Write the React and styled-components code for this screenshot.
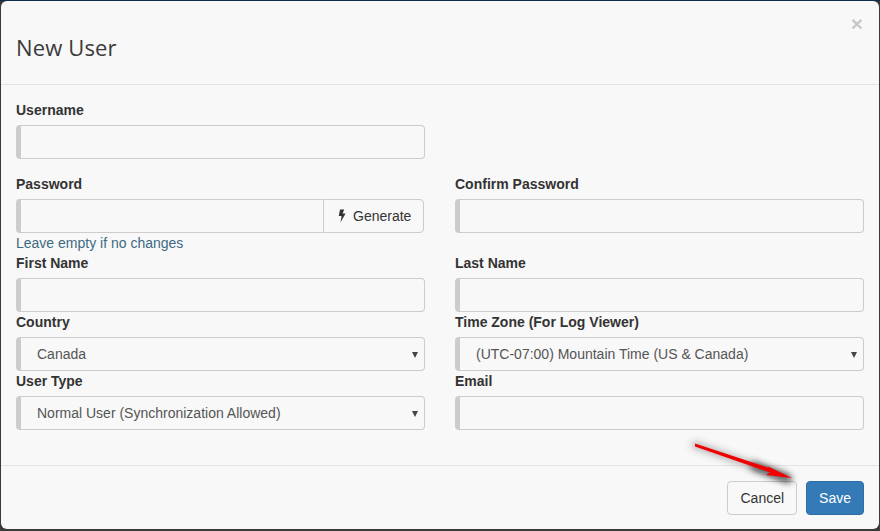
import React from "react";
import styled, { createGlobalStyle } from "styled-components";

const GlobalStyle = createGlobalStyle`
  html, body {
    margin: 0;
    padding: 0;
    background: #3a3a3a;
  }
  * {
    box-sizing: border-box;
  }
`;

const Backdrop = styled.div`
  width: 880px;
  height: 531px;
  padding: 0 1px 2px 1px;
  background: #3a3a3a;
  border-top: 1px solid #0f2b52;
  overflow: hidden;
`;

const Modal = styled.div`
  height: 100%;
  background: #f8f8f8;
  border-radius: 6px;
  font-family: "Liberation Sans", Arial, sans-serif;
  font-size: 14px;
  line-height: 20px;
  color: #333;
  display: flex;
  flex-direction: column;
`;

const Header = styled.header`
  position: relative;
  height: 84px;
  padding: 31px 15px 0;
  border-bottom: 1px solid #e5e5e5;
`;

const Title = styled.h4`
  margin: 0;
  font-family: "Open Sans", sans-serif;
  font-size: 22px;
  font-weight: 400;
  line-height: 30px;
  letter-spacing: 0.15px;
  color: #3a3a3a;
`;

const Close = styled.span`
  position: absolute;
  top: 12px;
  right: 16px;
  font-size: 21px;
  font-weight: 700;
  line-height: 21px;
  color: #c8c8c8;
`;

const Body = styled.form`
  flex: 1;
  padding: 15px 14px 0 15px;
  display: grid;
  grid-template-columns: 409px 409px;
  column-gap: 30px;
  align-content: start;
`;

const Group = styled.div`
  margin-bottom: ${(p) => (p.$spaced ? "15px" : "0")};
`;

const Label = styled.label`
  display: block;
  margin-bottom: 5px;
  font-weight: 700;
  color: #333;
`;

const Input = styled.input`
  display: block;
  width: 100%;
  height: 34px;
  padding: 6px 12px;
  background: transparent;
  border: 1px solid #ccc;
  border-left: 5px solid #ccc;
  border-radius: 4px;
  font: inherit;
  outline: none;
`;

const InputGroup = styled.div`
  display: flex;
  height: 34px;
  margin-right: 1px;
`;

const GroupedInput = styled(Input)`
  flex: 1;
  border-right: 0;
  border-radius: 4px 0 0 4px;
`;

const AddonButton = styled.button`
  width: 101px;
  display: flex;
  align-items: center;
  gap: 7px;
  padding: 0 0 0 14px;
  background: transparent;
  border: 1px solid #ccc;
  border-radius: 0 4px 4px 0;
  font: inherit;
  color: #333;
`;

const SelectBox = styled.div`
  position: relative;
  height: 34px;
  padding: 6px 12px 6px 16px;
  border: 1px solid #ccc;
  border-left: 5px solid #ccc;
  border-radius: 4px;
  color: #555;
  white-space: nowrap;

  &::after {
    content: "";
    position: absolute;
    right: 6px;
    top: 14px;
    border-left: 3px solid transparent;
    border-right: 3px solid transparent;
    border-top: 6px solid #444;
  }
`;

const Help = styled.div`
  color: #3d6a82;
  height: 20px;
`;

const Footer = styled.footer`
  position: relative;
  padding: 15px 15px 14px;
  border-top: 1px solid #e5e5e5;
  display: flex;
  justify-content: flex-end;
  gap: 9px;
`;

const Button = styled.button`
  height: 34px;
  padding: 6px 12px;
  border: 1px solid ${(p) => (p.$primary ? "#2e6da4" : "#ccc")};
  border-radius: 4px;
  background: ${(p) => (p.$primary ? "#337ab7" : "transparent")};
  color: ${(p) => (p.$primary ? "#fff" : "#333")};
  font: inherit;
`;

const Arrow = styled.svg`
  position: absolute;
  left: 685px;
  top: -30px;
  width: 130px;
  height: 60px;
  overflow: visible;
`;

function Bolt() {
  return (
    <svg width="8" height="14" viewBox="0 0 8 14" aria-hidden="true">
      <path d="M2 0.5h4.2L4.6 4.6h3L2.4 13.5l1.2-6.4H0.8z" fill="#333" />
    </svg>
  );
}

function App() {
  return (
    <Backdrop>
      <GlobalStyle />
      <Modal>
        <Header>
          <Title>New User</Title>
          <Close>×</Close>
        </Header>
        <Body>
          <Group $spaced>
            <Label>Username</Label>
            <Input />
          </Group>
          <div />
          <Group>
            <Label>Password</Label>
            <InputGroup>
              <GroupedInput />
              <AddonButton type="button">
                <Bolt /> Generate
              </AddonButton>
            </InputGroup>
            <Help>Leave empty if no changes</Help>
          </Group>
          <Group>
            <Label>Confirm Password</Label>
            <Input />
          </Group>
          <Group>
            <Label>First Name</Label>
            <Input />
          </Group>
          <Group>
            <Label>Last Name</Label>
            <Input />
          </Group>
          <Group>
            <Label>Country</Label>
            <SelectBox>Canada</SelectBox>
          </Group>
          <Group>
            <Label>Time Zone (For Log Viewer)</Label>
            <SelectBox>(UTC-07:00) Mountain Time (US &amp; Canada)</SelectBox>
          </Group>
          <Group>
            <Label>User Type</Label>
            <SelectBox>Normal User (Synchronization Allowed)</SelectBox>
          </Group>
          <Group>
            <Label>Email</Label>
            <Input />
          </Group>
        </Body>
        <Footer>
          <Button type="button">Cancel</Button>
          <Button type="button" $primary>Save</Button>
          <Arrow viewBox="0 0 130 60" aria-hidden="true">
            <defs>
              <filter id="glow" x="-30%" y="-100%" width="160%" height="300%">
                <feGaussianBlur stdDeviation="3.5" />
              </filter>
            </defs>
            <path d="M9 9L100 41" stroke="#444" strokeOpacity="0.4" strokeWidth="7" strokeLinecap="round" filter="url(#glow)" />
            <path d="M68 30L102 43" stroke="#111" strokeOpacity="0.75" strokeWidth="7" strokeLinecap="round" filter="url(#glow)" />
            <path d="M9 7.5L88 33.5L87 37.5L9 10.5z" fill="#f00000" />
            <path d="M106 42L81 30L86 35L80 39z" fill="#f00000" />
          </Arrow>
        </Footer>
      </Modal>
    </Backdrop>
  );
}

export default App;
